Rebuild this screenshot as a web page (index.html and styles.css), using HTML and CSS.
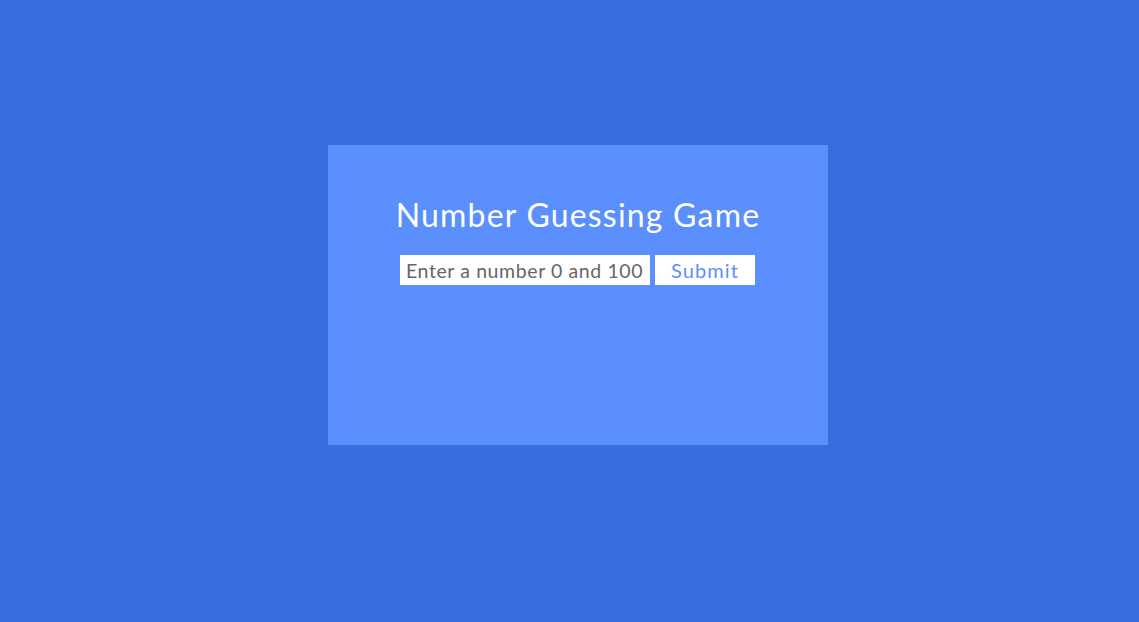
FILE: index.html
```html
<!DOCTYPE html>
<html>
<head>
<meta charset="utf-8">
<link rel="stylesheet" href="styles.css">
<title>Number Guessing Game</title>
</head>
<body>
<div class="page">
  <div class="card">
    <h1 class="title">Number Guessing Game</h1>
    <form class="row">
      <input class="guess" type="text" placeholder="Enter a number 0 and 100">
      <button class="submit" type="button">Submit</button>
    </form>
  </div>
</div>
</body>
</html>
```
FILE: styles.css
```css
html, body {
  margin: 0;
  padding: 0;
  height: 100%;
}
body {
  background: #386ddf;
  font-family: Lato, "Open Sans", sans-serif;
}
.page {
  display: flex;
  justify-content: center;
  padding: 145px 0 0 17px;
}
.card {
  width: 500px;
  height: 300px;
  background: #5b8ffe;
  display: flex;
  flex-direction: column;
  align-items: center;
  box-sizing: border-box;
  padding-top: 52px;
}
.title {
  margin: 0;
  font-weight: 400;
  font-size: 32px;
  line-height: 36px;
  letter-spacing: 1.2px;
  color: #fff;
}
.row {
  display: flex;
  gap: 5px;
  margin: 22px 1px 0 0;
}
.guess {
  width: 250px;
  height: 30px;
  box-sizing: border-box;
  border: none;
  outline: none;
  padding: 0 0 0 6px;
  font-family: inherit;
  font-size: 19.5px;
  letter-spacing: 0.6px;
  color: #666;
  background: #fff;
}
.guess::placeholder {
  color: #666;
  opacity: 1;
}
.submit {
  width: 100px;
  height: 30px;
  border: none;
  background: #fff;
  color: #5b8ffe;
  font-family: inherit;
  font-size: 20px;
  letter-spacing: 1.1px;
  padding: 0;
  cursor: pointer;
}
```
